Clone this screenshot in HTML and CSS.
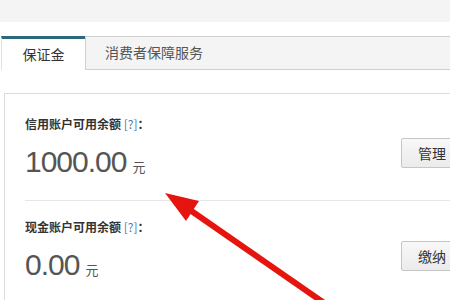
FILE: index.html
```html
<!DOCTYPE html>
<html lang="zh-CN">

<head>
    <meta charset="UTF-8">
    <meta name="viewport" content="width=device-width, initial-scale=1.0">
    <title>保证金</title>
    <link rel="stylesheet" href="styles.css">
</head>

<body>
    <div class="page">
        <div class="topbar"></div>
        <ul class="tabs">
            <li class="tab active">保证金</li>
            <li class="tab">消费者保障服务</li>
        </ul>
        <div class="panel">
            <div class="row first">
                <div class="info">
                    <div class="label">信用账户可用余额 <a class="help">[?]</a>：</div>
                    <div class="amount"><span class="num">1000.00</span><span class="unit">元</span></div>
                </div>
                <button class="btn">管理</button>
            </div>
            <div class="row">
                <div class="info">
                    <div class="label">现金账户可用余额 <a class="help">[?]</a>：</div>
                    <div class="amount"><span class="num">0.00</span><span class="unit">元</span></div>
                </div>
                <button class="btn">缴纳</button>
            </div>
        </div>
    </div>
    <!-- 标注箭头 -->
    <svg class="arrow" width="450" height="300" viewBox="0 0 450 300">
        <line x1="190" y1="210" x2="340" y2="314" stroke="#e5140f" stroke-width="6"/>
        <polygon points="165,193 199,201 186,221" fill="#e5140f"/>
    </svg>
</body>

</html>
```

FILE: styles.css
```css
* {
    margin: 0;
    padding: 0;
    list-style-type: none;
    box-sizing: border-box;
}
html, body {
    width: 100%;
    height: 100%;
    overflow: hidden;
    background-color: #fff;
}
body {
    position: relative;
    font-family: "Noto Sans CJK SC", "Liberation Sans", sans-serif;
    color: #333;
}
.page {
    width: 490px;
}
.topbar {
    height: 22px;
    background-color: #f4f4f4;
}
.tabs {
    display: flex;
    margin-top: 14px;
    padding-left: 1px;
    height: 34px;
}
.tab {
    font-size: 14px;
    line-height: 30px;
    color: #555;
    background-color: #f4f4f4;
    border-top: 1px solid #cfcfcf;
    border-bottom: 1px solid #cfcfcf;
    border-left: 1px solid #cfcfcf;
    padding-left: 19px;
    flex: 1;
}
.tab.active {
    flex: none;
    width: 84px;
    padding-left: 0;
    text-align: center;
    color: #333;
    background-color: #fff;
    border-top: 3px solid #2b6a7c;
    border-bottom: none;
    border-left: 1px solid #e2e2e2;
    line-height: 31px;
}
.panel {
    margin: 23px 0 0 4px;
    border: 1px solid #dcdcdc;
}
.row {
    display: flex;
    align-items: center;
    justify-content: space-between;
    margin: 0 26px 0 20px;
    padding: 18px 0 20px;
}
.row.first {
    padding-top: 22px;
    border-bottom: 1px solid #e6e6e6;
}
.label {
    font-size: 12px;
    line-height: 16px;
    height: 16px;
    font-weight: bold;
    color: #333;
}
.help {
    font-weight: normal;
    color: #4a78a8;
}
.amount {
    margin-top: 12px;
    height: 36px;
    line-height: 36px;
    font-family: "Liberation Sans", Arial, sans-serif;
    color: #555;
}
.num {
    font-size: 30px;
    letter-spacing: -1px;
}
.unit {
    font-family: "Noto Sans CJK SC", sans-serif;
    font-size: 13px;
    line-height: 1;
    margin-left: 6px;
}
.btn {
    margin-top: 9px;
    height: 30px;
    padding: 0 16px;
    font-family: "Noto Sans CJK SC", sans-serif;
    font-size: 14px;
    color: #333;
    background: linear-gradient(#f8f8f8, #ebebeb);
    border: 1px solid #c6c6c6;
    border-radius: 2px;
}
.arrow {
    position: absolute;
    top: 0;
    left: 0;
    pointer-events: none;
}
```
